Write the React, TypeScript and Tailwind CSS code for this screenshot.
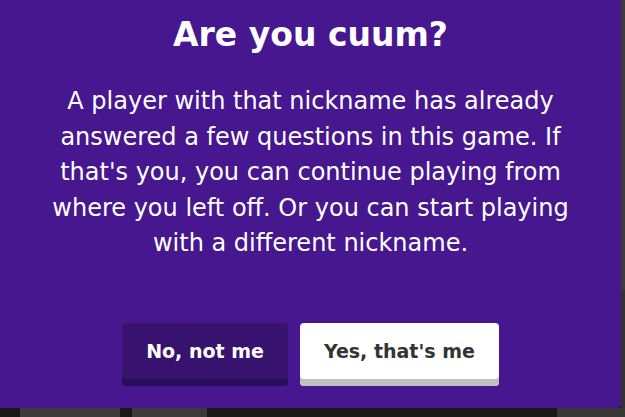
import React from "react";

function Backdrop() {
  return (
    <svg width="625" height="417" viewBox="0 0 625 417" className="block">
      <rect width="625" height="417" fill="#181818" />
      <rect x="621" y="0" width="4" height="290" fill="#3c3c3c" />
      <rect x="621" y="290" width="4" height="127" fill="#333333" />
      <rect x="20" y="408" width="100" height="9" fill="#3a3a3a" />
      <rect x="132" y="408" width="75" height="9" fill="#3a3a3a" />
      <rect x="557" y="408" width="68" height="9" fill="#363636" />
    </svg>
  );
}

function App() {
  return (
    <div className="relative w-[625px] h-[417px] overflow-hidden bg-[#181818] font-['DejaVu_Sans',sans-serif]">
      <Backdrop />

      {/* modal */}
      <div className="absolute left-0 top-0 w-[621px] h-[408px] bg-[#46178f] rounded-br-[4px] flex flex-col items-center pt-[15px] text-white">
        <h1 className="text-[33px] leading-[40px] font-bold">Are you cuum?</h1>

        <p className="mt-[29px] w-[545px] text-center text-[24px] leading-[35.5px]">
          A player with that nickname has already answered a few questions in
          this game. If that's you, you can continue playing from where you
          left off. Or you can start playing with a different nickname.
        </p>

        <div className="mt-[61.5px] flex gap-3">
          <button className="h-[63px] px-6 pb-[7px] rounded bg-[#38126f] shadow-[inset_0_-7px_0_#2a0c58] text-[19px] font-bold text-white">
            No, not me
          </button>
          <button className="h-[63px] px-6 pb-[7px] rounded bg-white shadow-[inset_0_-7px_0_#c0c0c0] text-[19px] font-bold text-[#333333]">
            Yes, that's me
          </button>
        </div>
      </div>
    </div>
  );
}

export default App;
